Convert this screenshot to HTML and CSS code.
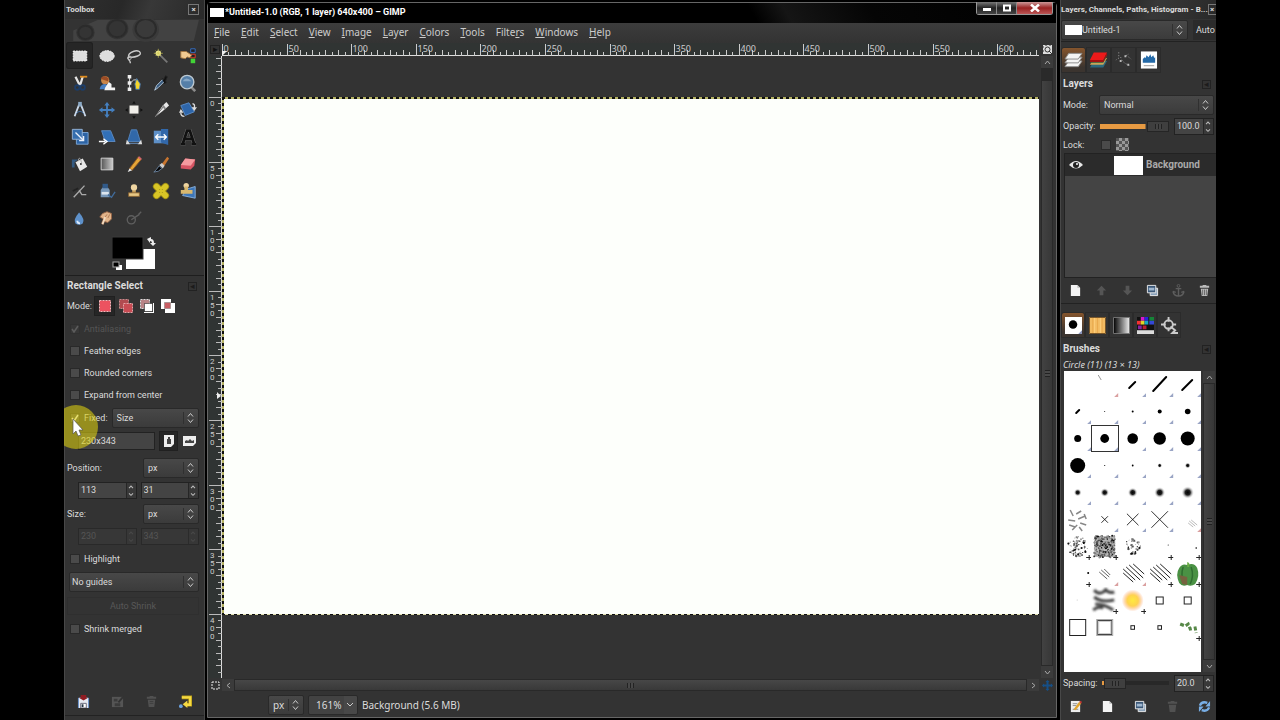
FILE: index.html
```html
<!DOCTYPE html>
<html lang="en">
<head>
<meta charset="utf-8">
<meta name="viewport" content="width=device-width, initial-scale=1.0">
<title>Untitled-1.0 - GIMP</title>
<link rel="stylesheet" href="styles.css">
</head>
<body>
<div class="desktop">

  <!-- toolbox -->
  <aside class="dock toolbox">
    <div class="dock-title"><span>Toolbox</span><button class="close" aria-label="Close toolbox">×</button></div>
    <svg class="banner" viewBox="0 0 136 24" preserveAspectRatio="none"><path d="M8 12l24-11h99l-5 22H8z" fill="#424242"/><circle cx="20" cy="14" r="9" fill="#343434"/><circle cx="51" cy="10" r="11" fill="#343434"/><circle cx="79" cy="11" r="13" fill="#3a3a3a"/><g fill="none" stroke="#2b2b2b" stroke-width="2"><circle cx="20" cy="14" r="7"/><circle cx="51" cy="10" r="9"/><circle cx="79" cy="10" r="10"/></g></svg>
    <div class="tools" id="tools"></div>
    <div class="colors">
      <svg width="44" height="36" viewBox="0 0 44 36"><rect x="14" y="13" width="29" height="20" fill="#fff"/><rect x="0" y="1" width="31" height="22" fill="#000" stroke="#3a3a3a"/><rect x="4" y="29" width="6" height="5" fill="#fff"/><rect x="1" y="26" width="6" height="5" fill="#000" stroke="#aaa"/><path d="M35 3l4-2v2q3 0 3 4h2l-3 3-3-3h2q0-2-2-2v2z" fill="#eee"/></svg>
    </div>

    <div class="options">
      <div class="heading"><h2>Rectangle Select</h2><button class="menu-btn" aria-label="Tool options menu">◂</button></div>
      <div class="row mode-row">
        <span>Mode:</span>
        <button class="mode active" aria-label="Replace"><svg viewBox="0 0 14 14"><path fill="#ec5260" stroke="#f6b9bd" stroke-dasharray="2 1" d="M1.500 1.500h11v11h-11z"/></svg></button>
        <button class="mode" aria-label="Add"><svg viewBox="0 0 14 14"><path fill="#b14b50" stroke="#c98a8c" stroke-dasharray="2 1" d="M.5.500h9v9h-9z"/><path fill="#c94c54" stroke="#e5a5a8" stroke-dasharray="2 1" d="M4.500 4.500h9v9h-9z"/></svg></button>
        <button class="mode" aria-label="Subtract"><svg viewBox="0 0 14 14"><path fill="#b98487" stroke="#ddd" stroke-dasharray="2 1" d="M.5.500h9v9h-9z"/><path fill="#fff" stroke="#111" stroke-dasharray="1 1" d="M4.500 4.500h8v8h-8z"/><path stroke="#fff" d="M13.500 4v10M4 13.500h10"/></svg></button>
        <button class="mode" aria-label="Intersect"><svg viewBox="0 0 14 14"><path fill="#fff" d="M0 0h10v10H0zM4 4h10v10H4z"/><path fill="#c95e64" stroke="#777" stroke-dasharray="1 1" d="M3.500 3.500h6v6h-6z"/></svg></button>
      </div>
      <label class="row check off"><input type="checkbox" checked disabled>Antialiasing</label>
      <label class="row check"><input type="checkbox">Feather edges</label>
      <label class="row check"><input type="checkbox">Rounded corners</label>
      <label class="row check"><input type="checkbox">Expand from center</label>
      <div class="row fixed-row">
        <label class="check"><input type="checkbox" checked>Fixed:</label>
        <select aria-label="Fixed"><option>Size</option></select>
      </div>
      <div class="row size-row">
        <input class="entry" type="text" value="230x343" aria-label="Fixed size">
        <button class="orient active" aria-label="Portrait"><svg width="10" height="12" viewBox="0 0 10 12"><path d="M0 0h10v9l-3 3H0z" fill="#eee"/><path d="M4 2h2v2h1v5H3V4h1z" fill="#444"/></svg></button>
        <button class="orient" aria-label="Landscape"><svg width="13" height="10" viewBox="0 0 13 10"><path d="M0 0h13v7l-3 3H0z" fill="#eee"/><path d="M2 7V5l2-1 1 1 2-2 2 2 2-1v3z" fill="#444"/></svg></button>
      </div>
      <div class="row unit-row"><label for="pos-unit">Position:</label><select id="pos-unit"><option>px</option></select></div>
      <div class="row pair"><span class="spin"><input type="text" value="113" aria-label="X"></span><span class="spin"><input type="text" value="31" aria-label="Y"></span></div>
      <div class="row unit-row"><label for="size-unit">Size:</label><select id="size-unit"><option>px</option></select></div>
      <div class="row pair off"><span class="spin"><input type="text" value="230" disabled aria-label="Width"></span><span class="spin"><input type="text" value="343" disabled aria-label="Height"></span></div>
      <label class="row check"><input type="checkbox">Highlight</label>
      <div class="row guide-row"><select aria-label="Guides"><option>No guides</option></select></div>
      <div class="row guide-row"><button class="shrink" disabled>Auto Shrink</button></div>
      <label class="row check"><input type="checkbox">Shrink merged</label>
    </div>
    <div class="dock-actions">
      <button aria-label="Save options"><svg viewBox="0 0 14 14"><path d="M1 3h12v11H1z" fill="#5b87c4"/><path d="M2 3h10v11H2z" fill="#e6eaf2"/><path d="M4 9h6v5H4z" fill="#fff" stroke="#667"/><path d="M5 10h2v3H5z" fill="#234"/><path d="M4 0h6v3h2L7 6 2 3h2z" fill="#8f1c22"/></svg></button>
      <button class="dim" aria-label="Restore options"><svg viewBox="0 0 14 14"><path d="M1 2h12v11H1z" fill="#777"/><path d="M3 4h4v3H3zM4 9h6v3H4z" fill="#444"/><path d="M8 8l5-6" stroke="#333" stroke-width="2"/></svg></button>
      <button class="dim" aria-label="Delete options"><svg viewBox="0 0 14 14"><path d="M3 5h8l-1 8H4zM2 2h10v2H2zM5 1h4v1H5z" fill="#707070"/><path d="M5 7h4M5 9h4" stroke="#484848"/></svg></button>
      <button aria-label="Reset options"><svg viewBox="0 0 14 14"><path d="M3 2.500h9v8H8" fill="none" stroke="#b79a14" stroke-width="4"/><path d="M3 2.500h9v8H8" fill="none" stroke="#f5da43" stroke-width="2.500"/><path d="M9 6v8l-5-4z" fill="#f5da43"/><circle cx="2" cy="12" r="2" fill="#6ba2e0"/></svg></button>
    </div>
  </aside>

  <!-- image window -->
  <main class="window">
    <header class="titlebar">
      <span class="thumb"></span><h1>*Untitled-1.0 (RGB, 1 layer) 640x400 – GIMP</h1>
      <div class="win-buttons">
        <button aria-label="Minimize"><svg width="10" height="8" viewBox="0 0 10 8"><path d="M1 4h8v3H1z" fill="#fff"/></svg></button>
        <button aria-label="Maximize"><svg width="10" height="8" viewBox="0 0 10 8"><path d="M2 1.500h6v5H2z" fill="none" stroke="#fff" stroke-width="2"/></svg></button>
        <button class="quit" aria-label="Close"><svg width="10" height="8" viewBox="0 0 10 8"><path d="M1 .5l8 7M9 .5l-8 7" stroke="#fff" stroke-width="2.500"/></svg></button>
      </div>
    </header>
    <nav class="menubar">
      <a href="#"><u>F</u>ile</a><a href="#"><u>E</u>dit</a><a href="#"><u>S</u>elect</a><a href="#"><u>V</u>iew</a><a href="#"><u>I</u>mage</a><a href="#"><u>L</u>ayer</a><a href="#"><u>C</u>olors</a><a href="#"><u>T</u>ools</a><a href="#">Filte<u>r</u>s</a><a href="#"><u>W</u>indows</a><a href="#"><u>H</u>elp</a>
    </nav>
    <div class="workspace">
      <button class="corner boxed" aria-label="Image menu">▸</button>
      <svg class="ruler-h" id="rulerH"></svg>
      <button class="corner" aria-label="Zoom with window"><svg width="9" height="9" viewBox="0 0 9 9"><rect width="9" height="9" fill="#ddd"/><circle cx="4.500" cy="4.500" r="2.500" fill="none" stroke="#333"/><path d="M6 6l3 3M0 2h1M0 6h1M3 0v1M7 0v1" stroke="#333"/></svg></button>
      <svg class="ruler-v" id="rulerV"></svg>
      <div class="view"><div class="image"></div></div>
      <div class="scroll-v"><button aria-label="Up"><svg width="7" height="5" viewBox="0 0 7 5"><path d="M1 4l2.500-3L6 4"/></svg></button><span class="thumb-v"><i class="grip"></i></span><button aria-label="Down"><svg width="7" height="5" viewBox="0 0 7 5"><path d="M1 1l2.500 3L6 1"/></svg></button></div>
      <button class="corner" aria-label="Quick mask"><svg width="9" height="9" viewBox="0 0 9 9"><path d="M1 1h7v7H1z" fill="none" stroke="#eee" stroke-dasharray="2 1"/></svg></button>
      <div class="scroll-h"><button aria-label="Left"><svg width="5" height="7" viewBox="0 0 5 7"><path d="M4 1L1 3.500 4 6"/></svg></button><span class="thumb-h"><i class="grip"></i></span><button aria-label="Right"><svg width="5" height="7" viewBox="0 0 5 7"><path d="M1 1l3 2.500L1 6"/></svg></button></div>
      <button class="corner" aria-label="Navigate"><svg width="11" height="11" viewBox="0 0 11 11"><path d="M5.500 1v9M1 5.500h9" stroke="#164f86" stroke-width="2"/><path d="M5.500 0l2 2h-4zM5.500 11l2-2h-4zM0 5.500l2-2v4zM11 5.500l-2-2v4z" fill="#164f86"/></svg></button>
    </div>
    <footer class="statusbar">
      <select class="unit" aria-label="Unit"><option>px</option></select>
      <select class="zoom" aria-label="Zoom"><option>161%</option></select>
      <span>Background (5.6 MB)</span>
    </footer>
  </main>

  <!-- layers and brushes -->
  <aside class="dock layers">
    <div class="dock-title"><span>Layers, Channels, Paths, Histogram - B...</span><button class="close" aria-label="Close dock">×</button></div>
    <div class="image-row"><span class="thumb"></span><select aria-label="Image"><option>Untitled-1</option></select><button class="auto">Auto</button></div>
    <div class="tabs">
      <button class="tab active" aria-label="Layers"><svg viewBox="0 0 20 18"><g fill="#f4f4f4" stroke="#8b8b8b"><path d="M1 16l4-6h14l-4 6z"/><path d="M1 12l4-6h14l-4 6z"/><path d="M1 8l4-6h14l-4 6z"/></g></svg></button>
      <button class="tab" aria-label="Channels"><svg viewBox="0 0 20 18"><path d="M1 17l4-7h14l-4 7z" fill="#2c687d"/><path d="M1 14l4-7h14l-4 7z" fill="#c9a557"/><path d="M1 12l4-7h14l-4 7z" fill="#315c38"/><path d="M1 9l4-8h14l-4 8z" fill="#ed1a1a"/><path d="M1 9h14l4-8v3l-4 7H1z" fill="#a31212"/></svg></button>
      <button class="tab" aria-label="Paths"><svg viewBox="0 0 20 18"><path d="M5 1v6l-3 2M7 6q2 7 11 9M12 5l3-2M13 4l5 4" fill="none" stroke="#aaa" stroke-dasharray="1 2"/><path d="M11 4h2v2h-2zM6 9h2v2H6zM14 13h2v2h-2z" fill="#bbb"/></svg></button>
      <button class="tab" aria-label="Histogram"><svg viewBox="0 0 20 18"><path d="M2 0h17v18H2z" fill="#fff"/><path d="M4 12V8l2-2 1 1 1-3 2 2 2-3 1 3 2-2 1 3 1-1v6z" fill="#246aa8"/><path d="M5 15h11" stroke="#999"/></svg></button>
    </div>
    <div class="heading"><h2>Layers</h2><button class="menu-btn" aria-label="Layers menu">◂</button></div>
    <div class="layer-row mode-line"><label for="blend">Mode:</label><select id="blend"><option>Normal</option></select></div>
    <div class="layer-row"><label for="opacity">Opacity:</label><input class="slider" id="opacity" type="range" min="0" max="100" value="100"><span class="spin"><input type="text" value="100.0" aria-label="Opacity value"></span></div>
    <div class="layer-row lock"><label for="lock">Lock:</label><input id="lock" type="checkbox"><span class="checker"></span></div>
    <div class="layer-list">
      <div class="layer"><svg width="14" height="10" viewBox="0 0 14 10"><path d="M0 5q7-8 14 0-7 7-14 0z" fill="#e8e8e8"/><circle cx="7" cy="5" r="3" fill="#222"/><circle cx="8" cy="4" r="1" fill="#fff"/></svg><span class="layer-thumb"></span><b>Background</b></div>
    </div>
    <div class="dock-actions top">
      <button aria-label="New layer"><svg viewBox="0 0 14 14"><path d="M2 1h7l3 3v9H2z" fill="#f4f4f4"/><path d="M9 1v3h3" fill="#bbb"/></svg></button>
      <button class="dim" aria-label="Raise"><svg viewBox="0 0 14 14"><path d="M7 2l5 5H9v5H5V7H2z" fill="#777"/></svg></button>
      <button class="dim" aria-label="Lower"><svg viewBox="0 0 14 14"><path d="M7 12l5-5H9V2H5v5H2z" fill="#777"/></svg></button>
      <button aria-label="Duplicate"><svg viewBox="0 0 14 14"><path d="M4.500 4.500h8v8h-8z" fill="#8ba3bb" stroke="#eee"/><path d="M1.500 1.500h9v8h-9z" fill="#3b5878" stroke="#eee"/><path d="M3 4h6v3H3z" fill="#9eb6cf"/></svg></button>
      <button class="dim" aria-label="Anchor"><svg viewBox="0 0 14 14"><path d="M7 4v9M4 5h6M1 8q1 5 6 5t6-5M1 8l3 1M13 8l-3 1" fill="none" stroke="#888" stroke-width="1.500"/><circle cx="7" cy="2" r="1.500" fill="none" stroke="#888"/></svg></button>
      <button aria-label="Delete"><svg viewBox="0 0 14 14"><path d="M3 5h8l-1 8H4zM2 2h10v2H2zM5 1h4v1H5z" fill="#bbb"/><path d="M5 6v6M7 6v6M9 6v6" stroke="#666"/></svg></button>
    </div>
    <div class="tabs lower">
      <button class="tab active" aria-label="Brushes"><svg viewBox="0 0 18 18"><path d="M0 0h18v18H0z" fill="#fff"/><circle cx="8.500" cy="8" r="4.500"/><path d="M18 14v4h-4z" fill="#8893bb"/></svg></button>
      <button class="tab" aria-label="Patterns"><svg viewBox="0 0 18 18"><path d="M0 0h18v18H0z" fill="#f2bb62"/><path d="M.5.500h17v17H.5z" fill="none" stroke="#6b4c25"/><path d="M4 1v16M9 1v16M14 1v16" stroke="#e9a94c"/><path d="M6 1v16M12 1v16" stroke="#ffd07e"/></svg></button>
      <button class="tab" aria-label="Gradients"><svg viewBox="0 0 18 18"><defs><linearGradient id="bw"><stop stop-color="#000"/><stop offset="1" stop-color="#eee"/></linearGradient></defs><path d="M.5.500h17v17H.5z" fill="url(#bw)" stroke="#777"/></svg></button>
      <button class="tab" aria-label="Palettes"><svg viewBox="0 0 18 18"><path d="M0 0h18v18H0z" fill="#111"/><path d="M4 0h4v4H4z" fill="#d719c8"/><path d="M8 0h4v4H8z" fill="#2825db"/><path d="M13 0h5v4h-5z" fill="#168438"/><path d="M0 4h4v4H0z" fill="#f43131"/><path d="M4 4h4v4H4z" fill="#dfd426"/><path d="M8 4h4v4H8z" fill="#17a7c2"/><path d="M13 4h5v4h-5z" fill="#3448d7"/><path d="M1 9h4v4H1z" fill="#8824a4"/><path d="M6 9h4v4H6z" fill="#b71e32"/><path d="M0 14h18v4H0z" fill="#ddd"/></svg></button>
      <button class="tab" aria-label="Tool presets"><svg viewBox="0 0 18 18"><g fill="none" stroke="#ccc" stroke-width="2"><circle cx="8" cy="8" r="4.500"/><path d="M8 0v5M0 8h5M12 8h4M8 11v4M10 10l5 4-3 3h6"/></g></svg></button>
    </div>
    <div class="heading"><h2>Brushes</h2><button class="menu-btn" aria-label="Brushes menu">◂</button></div>
    <p class="brush-name">Circle (11) (13 × 13)</p>
    <div class="brush-area">
      <div class="brushes" id="brushes"></div>
      <div class="scroll-v"><button aria-label="Up"><svg width="7" height="5" viewBox="0 0 7 5"><path d="M1 4l2.500-3L6 4"/></svg></button><span class="thumb-v"><i class="grip"></i></span><button aria-label="Down"><svg width="7" height="5" viewBox="0 0 7 5"><path d="M1 1l2.500 3L6 1"/></svg></button></div>
    </div>
    <div class="layer-row spacing"><label for="spacing">Spacing:</label><input class="slider low" id="spacing" type="range" min="0" max="200" value="8"><span class="spin"><input type="text" value="20.0" aria-label="Spacing value"></span></div>
    <div class="dock-actions bottom">
      <button aria-label="Edit brush"><svg viewBox="0 0 14 14"><path d="M2 1h10v12H2z" fill="#eee"/><path d="M4 4h5M4 6h4M4 10h6" stroke="#888"/><path d="M5 10l6-8 2 2-6 7z" fill="#e0a42f"/><path d="M11 2l1-1 2 1-1 2z" fill="#c33"/></svg></button>
      <button aria-label="New brush"><svg viewBox="0 0 14 14"><path d="M2 1h7l3 3v9H2z" fill="#f4f4f4"/><path d="M9 1v3h3" fill="#bbb"/></svg></button>
      <button aria-label="Duplicate brush"><svg viewBox="0 0 14 14"><path d="M4.500 4.500h8v8h-8z" fill="#8ba3bb" stroke="#eee"/><path d="M1.500 1.500h9v8h-9z" fill="#3b5878" stroke="#eee"/><path d="M3 4h6v3H3z" fill="#9eb6cf"/></svg></button>
      <button class="dim" aria-label="Delete brush"><svg viewBox="0 0 14 14"><path d="M3 5h8l-1 8H4zM2 2h10v2H2zM5 1h4v1H5z" fill="#707070"/></svg></button>
      <button aria-label="Refresh brushes"><svg viewBox="0 0 14 14"><path d="M2 6q2-5 8-3M12 8q-2 5-8 3" fill="none" stroke="#78aee5" stroke-width="2.500"/><path d="M13 1v6H8zM1 13V7h5z" fill="#78aee5"/></svg></button>
    </div>
  </aside>

  <svg class="pointer" width="46" height="46" viewBox="0 0 46 46"><circle cx="23" cy="23" r="22" fill="#d8cc10" fill-opacity=".6"/><path d="M20 15v15l3-3 2 5 3-1-2-5h4z" fill="#fff" stroke="#555" stroke-width=".7"/></svg>
</div>
<script src="script.js"></script>
</body>
</html>
```
FILE: styles.css
```css
* {
  box-sizing: border-box;
}
body {
  margin: 0;
  background: #000;
  color: #dcdcdc;
  font: 9px/12px Roboto, "Liberation Sans", sans-serif;
}
button, input, select {
  margin: 0;
  padding: 0;
  border: 0;
  color: inherit;
  font: inherit;
  background: none;
}
h1, h2, p {
  margin: 0;
}
svg {
  display: block;
}
.desktop {
  position: relative;
  display: grid;
  grid-template-columns: 141px 1fr 157px;
  gap: 2px;
  min-height: 100vh;
  margin: 0 64px;
  overflow: hidden;
}
.dock {
  display: flex;
  flex-direction: column;
  min-width: 0;
  overflow: hidden;
  background: #333;
  border-left: 1px solid #484848;
  border-right: 1px solid #484848;
}
.dock-title {
  display: flex;
  flex: none;
  justify-content: space-between;
  align-items: center;
  height: 19px;
  padding-left: 1px;
  font-size: 8px;
  font-weight: bold;
  background: linear-gradient(110deg, #303030, #282828 40%, #383838 60%, #292929);
  white-space: nowrap;
}
.close {
  flex: none;
  width: 11px;
  height: 11px;
  border: 1px solid #777;
  line-height: 8px;
}
.toolbox .close {
  margin-right: 5px;
}
.layers .close {
  width: 9px;
}
.layers .dock-title {
  padding-left: 0;
}

/* toolbox */
.banner {
  flex: none;
  width: 100%;
  height: 23px;
}
.tools {
  display: grid;
  grid-template-columns: repeat(5, 27px);
  grid-auto-rows: 27px;
  padding-left: 1px;
}
.tools button, .dock-actions button, .mode, .orient, .tab, .corner {
  display: flex;
  align-items: center;
  justify-content: center;
}
.tools button {
  border-radius: 3px;
}
.tools svg {
  width: 18px;
  height: 18px;
}
.tools .active, .mode.active, .orient.active {
  background: #262626;
  box-shadow: inset 0 0 0 1px #202020;
}
.colors {
  display: flex;
  justify-content: center;
  height: 45px;
  padding: 5px 2px 0 0;
  border-bottom: 1px solid #1e1e1e;
}
.options {
  display: flex;
  flex-direction: column;
  padding: 0 5px 0 2px;
}
.heading {
  display: flex;
  flex: none;
  align-items: center;
  justify-content: space-between;
  height: 20px;
}
h2 {
  font-size: 10px;
  line-height: 14px;
}
.menu-btn {
  width: 9px;
  height: 9px;
  margin-right: 2px;
  border: 1px solid #222;
  color: #1c1c1c;
  line-height: 7px;
}
.row {
  display: flex;
  align-items: center;
  height: 22px;
}
.mode-row {
  height: 20px;
  margin-bottom: 2px;
}
.mode {
  width: 21px;
  height: 20px;
}
.mode:first-of-type {
  margin-left: 2px;
}
.mode svg {
  width: 14px;
  height: 14px;
}
.check {
  display: flex;
  align-items: center;
  gap: 4px;
  padding-left: 3px;
}
input[type=checkbox] {
  appearance: none;
  width: 10px;
  height: 10px;
  background: #4a4a4a;
  border: 1px solid #292929;
}
input[type=checkbox]:checked {
  background: #4a4a4a url("data:image/svg+xml,%3Csvg xmlns='http://www.w3.org/2000/svg' viewBox='0 0 8 8'%3E%3Cpath d='M1 4l2 3 4-6' fill='none' stroke='%23fff' stroke-width='1.5'/%3E%3C/svg%3E");
}
input[type=checkbox]:disabled {
  opacity: 0.2;
}
.off {
  color: #555;
}
select {
  appearance: none;
  flex: 1;
  min-width: 0;
  height: 20px;
  padding: 0 16px 0 4px;
  border: 1px solid #292929;
  border-radius: 2px;
  background:
    url("data:image/svg+xml,%3Csvg xmlns='http://www.w3.org/2000/svg' width='15' height='12'%3E%3Cpath d='M.5 0v12' stroke='%23303030'/%3E%3Cpath d='M5 4.500l2.500-3 2.500 3M5 7.500l2.500 3 2.500-3' fill='none' stroke='%23ccc'/%3E%3C/svg%3E") right center no-repeat,
    linear-gradient(#484848, #3b3b3b);
}
.fixed-row {
  height: 24px;
  gap: 4px;
}
.size-row {
  gap: 2px;
  padding-left: 11px;
  margin-bottom: 4px;
}
.entry {
  flex: 1;
  min-width: 0;
  height: 18px;
  padding-left: 2px;
  margin-right: 2px;
  background: #444;
  border: 1px solid #222;
}
.orient {
  width: 19px;
  height: 20px;
}
.unit-row {
  justify-content: space-between;
  height: 24px;
}
.unit-row select {
  flex: 0 0 56px;
}
.pair {
  gap: 4px;
  height: 20px;
  padding-left: 11px;
  margin-bottom: 2px;
}
.spin {
  display: flex;
  flex: 1;
  min-width: 0;
  height: 17px;
  border: 1px solid #222;
  background:
    url("data:image/svg+xml,%3Csvg xmlns='http://www.w3.org/2000/svg' width='10' height='16'%3E%3Cpath d='M0 0h10v16H0z' fill='%23393939'/%3E%3Cpath d='M.5 0v16' stroke='%23262626'/%3E%3Cpath d='M3 5.500l2-2 2 2M3 10.500l2 2 2-2' fill='none' stroke='%23bbb'/%3E%3C/svg%3E") right center no-repeat,
    #444;
}
.spin input {
  width: 100%;
  padding: 0 10px 0 2px;
}
.pair.off .spin {
  background:
    url("data:image/svg+xml,%3Csvg xmlns='http://www.w3.org/2000/svg' width='10' height='16'%3E%3Cpath d='M.5 0v16' stroke='%232b2b2b'/%3E%3Cpath d='M3 5.500l2-2 2 2M3 10.500l2 2 2-2' fill='none' stroke='%23484848'/%3E%3C/svg%3E") right center no-repeat,
    #373737;
  border-color: #292929;
}
.guide-row {
  height: 24px;
}
.guide-row select {
  padding-left: 2px;
  margin-left: 2px;
}
.shrink {
  width: 100%;
  height: 18px;
  border: 1px solid #2f2f2f;
  color: #585858;
}
.dock-actions {
  display: flex;
  flex: none;
  justify-content: space-between;
  padding: 0 12px 0 12px;
  height: 28px;
}
.dock-actions svg {
  width: 13px;
  height: 13px;
}
.dim {
  opacity: 0.5;
}
.toolbox .dock-actions {
  margin: auto 0 4px;
  border-bottom: 1px solid #222;
}

/* image window */
.window {
  display: flex;
  flex-direction: column;
  min-width: 0;
  margin: 2px 0;
  background: #333;
  border: 1px solid #666;
  border-radius: 4px 4px 0 0;
}
.titlebar {
  display: flex;
  align-items: flex-start;
  height: 20px;
  padding-left: 2px;
  background: linear-gradient(60deg, #000 64%, #151515 68%, #050505 78%, #000);
}
.thumb {
  flex: none;
  width: 14px;
  height: 9px;
  background: #fff;
}
.titlebar .thumb {
  margin: 5px 1px 0 0;
}
h1 {
  flex: 1;
  color: #fff;
  font-size: 9px;
  line-height: 19px;
}
.win-buttons {
  display: flex;
  margin-right: 3px;
  margin-top: -1px;
  border: 1px solid #999;
  border-top: 0;
  border-radius: 0 0 3px 3px;
}
.win-buttons button {
  display: flex;
  align-items: center;
  justify-content: center;
  width: 20px;
  height: 12px;
  background: linear-gradient(#777, #222 50%, #444);
  border-right: 1px solid #888;
}
.win-buttons .quit {
  width: 35px;
  border: 0;
  background: linear-gradient(#c99, #922 50%, #b55);
}
.menubar {
  display: flex;
  gap: 11px;
  padding: 0 6px;
  height: 20px;
  font: 10px/19px "Noto Sans", sans-serif;
  background: linear-gradient(#3c3c3c, #333);
}
.menubar a {
  color: #ccc;
  text-decoration: none;
}
.workspace {
  display: grid;
  flex: 1;
  min-height: 0;
  grid-template-columns: 14px 1fr 17px;
  grid-template-rows: 13px 1fr 14px;
}
.corner {
  color: #111;
}
.boxed {
  margin: 2px;
  border: 1px solid #222;
  line-height: 7px;
}
.ruler-h, .ruler-v {
  width: 100%;
  height: 100%;
  background: #303433;
  overflow: hidden;
  font: 9px "Noto Sans", sans-serif;
  fill: #ccc;
}
.ruler-v {
  font: 8px Roboto, sans-serif;
}
.view {
  min-width: 0;
  padding-top: 41px;
  overflow: hidden;
}
.image {
  height: 518px;
  background:
    repeating-linear-gradient(90deg, #111 0 3px, #b5b262 3px 6px) top / 100% 2px no-repeat,
    repeating-linear-gradient(90deg, #111 0 3px, #e0dfae 3px 6px) bottom / 100% 1px no-repeat,
    repeating-linear-gradient(#111 0 3px, #b5b262 3px 6px) left / 2px 100% no-repeat,
    #fdfffb;
}
.scroll-v, .scroll-h {
  display: flex;
  background: #2a2a2a;
}
.scroll-v {
  flex: none;
  flex-direction: column;
  width: 12px;
  margin: 0 2px;
}
.scroll-h {
  height: 12px;
  margin-top: 1px;
}
.scroll-v button, .scroll-h button {
  display: flex;
  flex: none;
  align-items: center;
  justify-content: center;
  width: 12px;
  height: 12px;
  background: #3b3b3b;
}
.scroll-v path, .scroll-h path {
  fill: none;
  stroke: #aaa;
}
.thumb-v, .thumb-h {
  display: flex;
  flex: 1;
  align-items: center;
  justify-content: center;
  border: 1px solid #292929;
}
.thumb-v {
  background: linear-gradient(90deg, #424242, #373737);
}
.window .thumb-v {
  margin-top: 12px;
}
.thumb-h {
  background: linear-gradient(#474747, #393939);
}
.grip {
  width: 7px;
  height: 5px;
  background: repeating-linear-gradient(90deg, #222 0 1px, #484848 1px 3px);
}
.thumb-v .grip {
  width: 5px;
  height: 7px;
  background: repeating-linear-gradient(#222 0 1px, #484848 1px 3px);
}
.statusbar {
  display: flex;
  align-items: center;
  gap: 4px;
  height: 25px;
  padding-left: 60px;
  font: 10px/14px "Noto Sans", sans-serif;
}
.statusbar select {
  flex: none;
}
.unit {
  width: 36px;
}
.zoom {
  width: 50px;
  padding: 0 13px 0 7px;
  background:
    url("data:image/svg+xml,%3Csvg xmlns='http://www.w3.org/2000/svg' width='13' height='18'%3E%3Cpath d='M0 0h13v18H0z' fill='%23484848'/%3E%3Cpath d='M3 7l3 3 3-3' fill='none' stroke='%23ccc'/%3E%3C/svg%3E") right center no-repeat,
    #424242;
}

/* right dock */
.layers {
  margin-left: 1px;
  border-right: 0;
}
.image-row {
  position: relative;
  display: flex;
  flex: none;
  align-items: center;
  gap: 5px;
  height: 23px;
  margin-bottom: 5px;
  border-bottom: 1px solid #222;
}
.image-row .thumb {
  position: absolute;
  left: 4px;
  width: 17px;
  height: 10px;
}
.image-row select {
  padding-left: 20px;
}
.auto {
  width: 23px;
  height: 20px;
  padding-left: 3px;
  background: #2b2b2b;
  text-align: left;
}
.tabs {
  display: flex;
  flex: none;
  height: 26px;
}
.tab {
  width: 25px;
  border: 1px solid #2b2b2b;
}
.tab.active {
  background: linear-gradient(#85552d, #3b342f 80%);
  border-radius: 3px 3px 0 0;
}
.tab svg {
  width: 19px;
  height: 18px;
}
.layers .heading {
  height: 22px;
  padding: 0 3px 0 2px;
}
.layer-row {
  display: flex;
  flex: none;
  align-items: center;
  height: 22px;
  padding: 0 2px 0 2px;
  gap: 5px;
}
.mode-line {
  height: 20px;
}
.mode-line label {
  width: 31px;
}
.layer-row .spin {
  flex: 0 0 40px;
}
.slider {
  appearance: none;
  flex: 1;
  min-width: 0;
  height: 11px;
  background: linear-gradient(#e79a42, #e79a42) left center / 66% 5px no-repeat;
}
.slider::-webkit-slider-thumb {
  appearance: none;
  width: 22px;
  height: 11px;
  border: 1px solid #252525;
  background: repeating-linear-gradient(90deg, #222 0 1px, #444 1px 3px) center / 7px 5px no-repeat, #3f3f3f;
}
.slider.low {
  background: linear-gradient(90deg, #e79a42 4px, #282828 4px) left center / 100% 4px no-repeat;
}
.lock {
  height: 15px;
}
.lock label {
  width: 33px;
}
.checker {
  width: 13px;
  height: 13px;
  background: repeating-conic-gradient(#999 0 25%, #555 0 50%) 0 0 / 6px 6px;
}
.layer-list {
  flex: none;
  height: 125px;
  margin: 1px 0 0 3px;
  border: 1px solid #222;
  border-right: 0;
  background: #444;
}
.layer {
  display: flex;
  align-items: center;
  height: 22px;
  padding-left: 4px;
  color: #aaa;
  background: #2b2b2b;
  font-size: 10px;
}
.layer-thumb {
  width: 29px;
  height: 19px;
  margin: 0 3px 0 31px;
  background: #fff;
}
.layers .dock-actions {
  height: 26px;
  padding: 0 5px 0 8px;
}
.layers .dock-actions.top {
  border-bottom: 1px solid #222;
  margin-bottom: 8px;
}
.layers .dock-actions.bottom {
  padding-bottom: 2px;
}
.lower .tab {
  width: 24px;
}
.lower .tab svg {
  width: 17px;
  height: 17px;
}
.brush-name {
  margin-top: -2px;
  padding-left: 2px;
  font: italic 9px/13px "Noto Sans", sans-serif;
}
.brush-area {
  display: flex;
  flex: 1;
  min-height: 0;
  padding-left: 3px;
}
.brushes {
  display: grid;
  flex: 1;
  grid-template-columns: repeat(5, 1fr);
  grid-auto-rows: 27px;
  background: #fff;
  align-content: start;
}
.layers .scroll-v {
  margin-right: 1px;
}
.brushes svg {
  width: 100%;
  height: 27px;
}
.brushes button {
  min-width: 0;
}
.brushes .selected {
  outline: 1px solid #333;
  outline-offset: -1px;
}

/* click highlight over the Fixed box */
.pointer {
  position: absolute;
  left: -11px;
  top: 404px;
  pointer-events: none;
}
```
FILE: script.js
```javascript
// toolbox icons, drawn on a 20x20 grid
const tools = [
  ['Rectangle select', '<path d="M2.500 4.500h15v11h-15z" fill="#ddd" stroke="#fff" stroke-dasharray="2 1"/>'],
  ['Ellipse select', '<ellipse cx="10" cy="10" rx="8" ry="6" fill="#ddd" stroke="#fff" stroke-dasharray="2 1"/>'],
  ['Free select', '<path d="M5 12q-3-3 2-6t9-1q3 3-2 5t-9 1q-3 1-1 3t2 4" fill="none" stroke="#ccc" stroke-width="1.500"/><circle cx="5" cy="12" r="2" fill="none" stroke="#bbb"/>'],
  ['Fuzzy select', '<path d="M9 9l8 8" stroke="#777" stroke-width="2"/><circle cx="7" cy="7" r="3" fill="#ece99b"/><path d="M7 2v10M2 7h10M4 4l6 6M10 4l-6 6" stroke="#d4cc55" stroke-width=".7"/>'],
  ['Select by color', '<path d="M13 2h5v4h-5z" fill="#222" stroke="#3874ce"/><path d="M13 8h5v4h-5z" fill="#222" stroke="#ee4028"/><path d="M13 13h5v5h-5z" fill="#41d336"/><path d="M2 5h6l6 4-2 3-3-1-2 2-5-1z" fill="#f1ca91" stroke="#a3753f"/>'],
  ['Scissors', '<path d="M5 3l5 10M13 3l-3 10" stroke="#e4e4e4" stroke-width="2.500"/><path d="M10 3h8" stroke="#dd8c1f" stroke-width="2"/><g fill="none" stroke="#1d3d68" stroke-width="2"><circle cx="7" cy="15" r="2.500"/><circle cx="13" cy="15" r="2.500"/></g>'],
  ['Foreground select', '<circle cx="8" cy="7" r="4.500" fill="#c98547"/><path d="M3 5q3-5 9 0l-1 3-6-2z" fill="#9b4b25"/><path d="M2 16q1-5 6-5l5 2v4H2z" fill="#477fc3"/><path d="M8 15l4-6 3 2v4h4v3H7z" fill="#f4f4f4"/>'],
  ['Paths', '<path d="M5 2v16M6 10q8-10 10 6" fill="none" stroke="#ddd"/><path d="M3 1h4v4H3zM3 8h4v4H3zM3 15h4v4H3z" fill="#eee"/><path d="M13 5l4 6-1 6h-4l-1-6z" fill="#f5d429" stroke="#4476b0"/>'],
  ['Color picker', '<path d="M3 18l2-5 7-7 2 2-7 7z" fill="#36587c" stroke="#bbd0e4"/><path d="M11 5l2 1 2-4 2 1-2 5 1 1-2 2" fill="#111" stroke="#222"/>'],
  ['Zoom', '<path d="M13 14l5 5" stroke="#8c8c8c" stroke-width="3"/><circle cx="9" cy="9" r="7.500" fill="#557fa8" stroke="#bcc8d0" stroke-width="1.500"/><path d="M4 8q4-6 10 0" fill="#86a7c6"/>'],
  ['Measure', '<path d="M9 4l-5 13M11 4l5 13" stroke="#cddaea" stroke-width="2"/><path d="M6 14q4-5 8 0" fill="none" stroke="#3f71a8"/><path d="M8 1h4v5H8z" fill="#8ba9c6"/>'],
  ['Move', '<path d="M10 4v12M4 10h12" stroke="#4580c0" stroke-width="2"/><path d="M10 1l3 4H7zM10 19l3-4H7zM1 10l4-3v6zM19 10l-4-3v6z" fill="#4580c0"/>'],
  ['Align', '<path d="M5 5h10v9H5z" fill="#f0eee9"/><path d="M10 0l2 3H8zM10 20l2-3H8zM0 10l3-2v4zM20 10l-3-2v4z" fill="#111"/>'],
  ['Crop', '<path d="M3 18L12 5l4-4 3 4-7 6z" fill="#e8e8e8"/><path d="M4 17l9-11" stroke="#555"/><path d="M12 5l3 4" stroke="#888" stroke-width="2"/>'],
  ['Rotate', '<path d="M2 5l9-3 6 10-10 4z" fill="#2e66aa" stroke="#5d8fc8"/><path d="M15 3q3 0 2 5M6 17q-4 0-4-4" fill="none" stroke="#ddd" stroke-width="1.500"/><path d="M14 7h6l-3 4zM0 13h5l-3-4z" fill="#ddd"/>'],
  ['Scale', '<path d="M6 5h13v13H6z" fill="#2d64a5" stroke="#7faada"/><path d="M1.500 1.500h11v11h-11z" fill="#356eae" stroke="#9ab8da"/><path d="M5 5l9 9M9 14h5V9" fill="none" stroke="#e8f0fc" stroke-width="1.500"/>'],
  ['Shear', '<path d="M4 3h10l5 12H8z" fill="#3270b7" stroke="#5d8cc4"/><path d="M1 15h7M6 12l4 3-4 3" fill="none" stroke="#fff" stroke-width="1.500"/>'],
  ['Perspective', '<path d="M7 2h6l4 13H3z" fill="#3168a9" stroke="#5485bd"/><path d="M1 18l1-5 4 5zM19 18l-1-5-4 5z" fill="#ddd"/><path d="M5 17h10" stroke="#6f9bce"/>'],
  ['Flip', '<path d="M2 3h15v14H2z" fill="#5e90c8"/><path d="M10 1h8v18l-8-3z" fill="#3268aa"/><path d="M4 10h12M7 7l-3 3 3 3M13 7l3 3-3 3" fill="none" stroke="#fff" stroke-width="1.500"/>'],
  ['Text', '<path d="M4 18L9 3h3l5 15M7 12h7M2 18h5M14 18h5" fill="none" stroke="#777" stroke-width="4"/><path d="M4 18L9 3h3l5 15M7 12h7M2 18h5M14 18h5" fill="none" stroke="#111" stroke-width="3"/>'],
  ['Bucket fill', '<path d="M1 5v9h3V8l4-3z" fill="#335980"/><path d="M5 8l8-4 5 9-8 5z" fill="#e9e9e9"/><path d="M8 7q1-8 4 2" fill="none" stroke="#aaa"/><circle cx="11" cy="10" r="1" fill="#222"/>'],
  ['Blend', '<defs><linearGradient id="blend-tool"><stop stop-color="#555"/><stop offset="1" stop-color="#ccc"/></linearGradient></defs><path d="M3.500 3.500h13v13h-13z" fill="url(#blend-tool)" stroke="#ddd"/>'],
  ['Pencil', '<path d="M5 15L15 2l3 3L8 17z" fill="#e5a638" stroke="#8f561e"/><path d="M5 15l3 2-5 2z" fill="#eee"/><path d="M15 2l3 3" stroke="#d3666d" stroke-width="2"/>'],
  ['Paintbrush', '<path d="M10 11l7-9 2 2-6 9z" fill="#c8752f"/><path d="M8 11l3-2 3 3-2 3z" fill="#ccc"/><path d="M8 12l3 3-4 3-5 1 3-3z" fill="#050505" stroke="#6d86a3"/>'],
  ['Eraser', '<path d="M7 4l11 1-1 7-4 4L2 15v-4z" fill="#d65564"/><path d="M7 4l11 1-5 7-11-1z" fill="#f49a9f"/>'],
  ['Airbrush', '<path d="M3 17l12-13M9 9l3 5h5" fill="none" stroke="#aaa" stroke-width="1.500"/><path d="M2 10l6-3" stroke="#222" stroke-width="2"/>'],
  ['Ink', '<path d="M3 9l2-3h6l2 3v8H3z" fill="#7898b9"/><path d="M5 2h6v5H5z" fill="#315a89"/><path d="M4 11h8v3H4z" fill="#dce5ee"/><path d="M11 14l4 3 4-6" fill="none" stroke="#416b9a" stroke-width="1.500"/>'],
  ['Clone', '<path d="M8 9h4v4H8z" fill="#c79f58"/><circle cx="10" cy="6" r="3.500" fill="#efd5a1"/><path d="M4 12h12v4H4z" fill="#e8c884" stroke="#896332"/>'],
  ['Heal', '<path d="M5 5l10 10M15 5L5 15" stroke="#9c8c16" stroke-width="8" stroke-linecap="round"/><path d="M5 5l10 10M15 5L5 15" stroke="#d8c526" stroke-width="6" stroke-linecap="round"/><path d="M8 8h1v1H8zM11 8h1v1h-1zM8 11h1v1H8zM11 11h1v1h-1z" fill="#97881c"/>'],
  ['Perspective clone', '<path d="M8 8l10-3v13L4 15z" fill="#3d76b8" stroke="#8bb3df"/><circle cx="8" cy="4" r="3" fill="#efd5a1"/><path d="M6 5h4v4h5v4H2V9h4z" fill="#d8b86f"/>'],
  ['Blur', '<path d="M9 4q7 8 4 12-4 3-8 0-3-4 4-12z" fill="#5e91ca"/><path d="M7 13q0 3 3 3" fill="none" stroke="#dbeafe" stroke-width="2"/>'],
  ['Smudge', '<path d="M4 16l2-5-4-2 3-4 5-2 5 2v6l-4 4-4-1-1 3z" fill="#e2b48a" stroke="#966446"/><path d="M8 9l2-3M11 10l2-4" stroke="#ab7752"/><path d="M8 9l-3 8" stroke="#f3dbc0" stroke-width="2"/>'],
  ['Dodge / burn', '<g opacity=".65"><circle cx="7" cy="12" r="4.500" fill="#333" stroke="#777" stroke-width="1.500"/><path d="M7 12l9-6M15 6l3-3" stroke="#777" stroke-width="1.500"/></g>'],
];
document.getElementById('tools').innerHTML = tools.map(([name, art], i) =>
  `<button aria-label="${name}"${i === 0 ? ' class="active"' : ''}><svg viewBox="0 0 20 20">${art}</svg></button>`).join('');

// rulers: screen pixels per image pixel at the current zoom
const SCALE = 1.292;
let h = '<path d="M0 12.500h1200" stroke="#ddd"/>';
let v = '<path d="M13.500 0v700" stroke="#ddd"/>';
for (let n = 0; n <= 630; n += 5) {
  const x = Math.round(n * SCALE) + 0.5;
  const major = n % 50 === 0;
  h += `<path d="M${x} ${major ? 1 : n % 10 ? 9 : 7}V13" stroke="#ccc"/>`;
  if (major) h += `<text x="${x + 1}" y="9">${n}</text>`;
}
for (let n = -30; n <= 445; n += 5) {
  const y = Math.round(n * SCALE) + 41.5;
  const major = n % 50 === 0;
  v += `<path d="M${major ? 1 : n % 10 ? 10 : 8} ${y}H14" stroke="#bbb"/>`;
  if (major) String(n).split('').forEach((d, i) => v += `<text x="2" y="${y + 8 + i * 8}">${d}</text>`);
}
h += '<path d="M0 8h5l-5 5z" fill="#eee"/>';
v += '<path d="M9 336v7l4-3z" fill="#eee"/>';
document.getElementById('rulerH').innerHTML = h;
document.getElementById('rulerV').innerHTML = v;

// brushes
const dot = r => `<circle cx="13.500" cy="13.500" r="${r}"/>`;
const soft = r => `<circle cx="13.500" cy="13.500" r="${r}" fill="url(#soft)"/>`;
const line = (d, w) => `<path d="${d}" stroke="#000" stroke-width="${w}" stroke-linecap="round"/>`;
const cross = r => line(`M${13.5 - r} ${13.5 - r}l${2 * r} ${2 * r}M${13.5 + r} ${13.5 - r}l${-2 * r} ${2 * r}`, 0.8);
const box = (r, c = '#222') => `<rect x="${13.5 - r}" y="${13.5 - r}" width="${2 * r}" height="${2 * r}" fill="none" stroke="${c}"/>`;
const blue = '<path d="M27 22v4h-4z" fill="#9aa5c5"/>';
const red = '<path d="M27 22v4h-4z" fill="#daa0a0"/>';
const plus = '<path d="M25 22v5M22 24.500h5" stroke="#222"/>';
// scattered specks, repeatable for a given seed
function grain(count, radius, size, square) {
  let out = '';
  let seed = count;
  const rnd = () => (seed = (seed * 9301 + 49297) % 233280) / 233280;
  for (let i = 0; i < count; i++) {
    const a = rnd() * 6.28;
    const r = radius * Math.sqrt(rnd());
    const x = square ? 13.5 + (rnd() * 2 - 1) * radius : 13.5 + r * Math.cos(a);
    const y = square ? 13.5 + (rnd() * 2 - 1) * radius : 13.5 + r * Math.sin(a);
    out += `<circle cx="${x.toFixed(1)}" cy="${y.toFixed(1)}" r="${(size * (0.3 + rnd())).toFixed(1)}" fill="${['#111', '#555', '#999'][i % 3]}"/>`;
  }
  return out;
}
const hatch = '<path d="M4 9l12 11M4 13l10 9M7 7l14 13M10 5l14 13M14 4l11 10" stroke="#222"/>';
const brushes = [
  '', '<path d="M7 4l3 5" stroke="#999"/>' + red, line('M10 17l6-6', 2) + blue, line('M7 20L20 6', 2) + blue, line('M8 19l10-10', 2) + blue,
  line('M12 15l3-3', 2) + blue, dot(0.5) + blue, dot(1) + blue, dot(2) + blue, dot(2.8) + blue,
  dot(3.5) + blue, dot(4.4) + blue, dot(5.3) + blue, dot(6.2) + blue, dot(7) + blue,
  dot(7.5) + blue, dot(0.6) + blue, dot(0.9) + blue, soft(2.5) + blue, soft(3) + blue,
  soft(4) + blue, soft(4.5) + blue, soft(5) + blue, soft(5.7) + blue, soft(6.5) + blue,
  '<path d="M6 4l3 6M12 8l5-3M4 14l7 1M14 13l7-3M5 19l6 2M16 17l6 2M8 24l5-5M20 8l2 5M15 21l3 4" stroke="#888" stroke-width="1.500"/>', cross(3) + blue, cross(5.5) + blue, cross(8) + blue, '<path d="M15 15l6 5M17 14l6 5M14 17l5 4" stroke="#bbb"/>' + red,
  grain(80, 10, 0.9) + plus, '<rect x="3" y="3" width="21" height="21" fill="#888" opacity=".6"/>' + grain(330, 11, 0.8, true) + plus, grain(45, 8, 0.9), '<circle cx="22" cy="12" r=".5"/>' + plus, '<circle cx="22" cy="15" r=".8"/>' + plus,
  '<circle cx="24" cy="13" r="1"/>' + plus, '<path d="M8 12l8 7M10 10l8 7M13 9l6 6" stroke="#666"/>' + red, hatch + red, hatch + plus,
  '<path d="M5 8q3-5 8-3 7-3 10 3 3 8-2 16-4 3-8 1-5 2-8-2Q1 14 5 8z" fill="#4a9144"/><path d="M9 7q-3 8 1 17M17 7q3 9-1 17" fill="none" stroke="#2f6d30" stroke-width="1.500"/><path d="M5 15l3 9 5 1v-8z" fill="#76623f"/><path d="M13 7V2l2 1v4" fill="#6aac46"/>' + plus,
  '<circle cx="13" cy="13" r=".5" fill="#bbb"/>', '<g filter="url(#smear)"><path d="M3 3q4 5 9 2l4-3M3 10q7 6 20 3M2 23q5-4 10-2M13 2q5 5 10 3M4 17q9 0 18 6" fill="none" stroke="#444" stroke-width="3"/></g>' + plus, '<circle cx="13.500" cy="13.500" r="11" fill="url(#sun)"/>' + plus, box(3.5), box(3.5),
  box(8), box(7, '#444') + '<rect x="7.500" y="7.500" width="12" height="12" fill="none" stroke="#ccc"/>' + box(8, '#aaa'), box(1.8), box(1.8), '<path d="M6 10l5 2 3-2 2 5 5-1 1 5" fill="none" stroke="#578848" stroke-width="3" stroke-dasharray="4 2"/>' + plus,
];
const defs = '<defs><radialGradient id="soft"><stop stop-color="#000"/><stop offset=".4" stop-color="#222"/><stop offset="1" stop-color="#fff" stop-opacity="0"/></radialGradient><radialGradient id="sun"><stop stop-color="#ffe93f"/><stop offset=".5" stop-color="#ffd34f"/><stop offset="1" stop-color="#ff9f70" stop-opacity="0"/></radialGradient><filter id="smear"><feGaussianBlur stdDeviation="1"/></filter></defs>';
document.getElementById('brushes').innerHTML = brushes.map((art, i) =>
  `<button aria-label="Brush ${i + 1}"${i === 11 ? ' class="selected"' : ''}><svg viewBox="0 0 27 27">${i ? '' : defs}${art}</svg></button>`).join('');
```
